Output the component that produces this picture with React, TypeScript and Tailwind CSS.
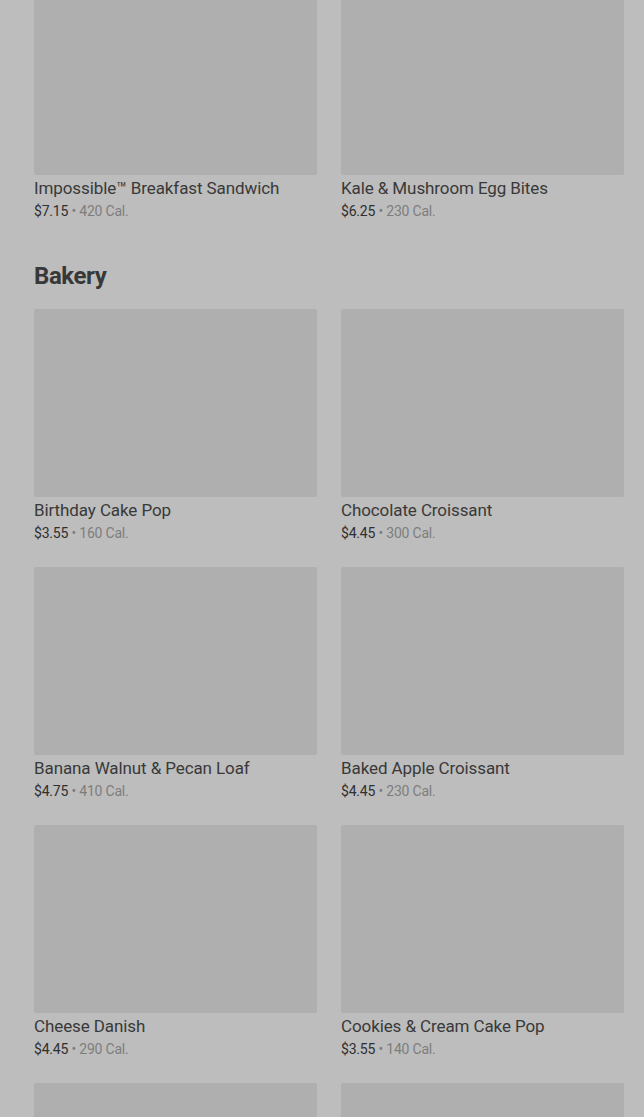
const breakfast = [
  { name: "Impossible™ Breakfast Sandwich", price: "$7.15", cal: "420 Cal." },
  { name: "Kale & Mushroom Egg Bites", price: "$6.25", cal: "230 Cal." },
];

const bakery = [
  { name: "Birthday Cake Pop", price: "$3.55", cal: "160 Cal." },
  { name: "Chocolate Croissant", price: "$4.45", cal: "300 Cal." },
  { name: "Banana Walnut & Pecan Loaf", price: "$4.75", cal: "410 Cal." },
  { name: "Baked Apple Croissant", price: "$4.45", cal: "230 Cal." },
  { name: "Cheese Danish", price: "$4.45", cal: "290 Cal." },
  { name: "Cookies & Cream Cake Pop", price: "$3.55", cal: "140 Cal." },
];

type Item = { name: string; price: string; cal: string };

function ItemCard({ item }: { item: Item }) {
  return (
    <div className="min-w-0">
      <div className="h-[188px] w-full rounded-[2px] bg-[#afafaf]" />
      <div className="mt-px truncate text-[17px] leading-6 tracking-[-0.1px] text-[#393939]">
        {item.name}
      </div>
      <div className="text-[14px] leading-[22px] tracking-[-0.2px]">
        <span className="text-[#2f2f2f]">{item.price}</span>
        <span className="text-[#7d7d7d]"> • {item.cal}</span>
      </div>
    </div>
  );
}

export default function App() {
  return (
    <div
      className="h-screen overflow-hidden bg-[#bdbdbd] pl-[34px] pr-[20px]"
      style={{ fontFamily: "Roboto, 'Liberation Sans', sans-serif" }}
    >
      <div className="-mt-[13px] grid grid-cols-2 gap-x-6 gap-y-[23px]">
        {breakfast.map((item) => (
          <ItemCard key={item.name} item={item} />
        ))}
      </div>

      <h2 className="mt-[38px] mb-[17px] text-[24px] font-bold leading-8 tracking-[-0.4px] text-[#383838]">
        Bakery
      </h2>

      <div className="grid grid-cols-2 gap-x-6 gap-y-[23px]">
        {bakery.map((item) => (
          <ItemCard key={item.name} item={item} />
        ))}
        <div className="h-[188px] rounded-[2px] bg-[#afafaf]" />
        <div className="h-[188px] rounded-[2px] bg-[#afafaf]" />
      </div>
    </div>
  );
}
